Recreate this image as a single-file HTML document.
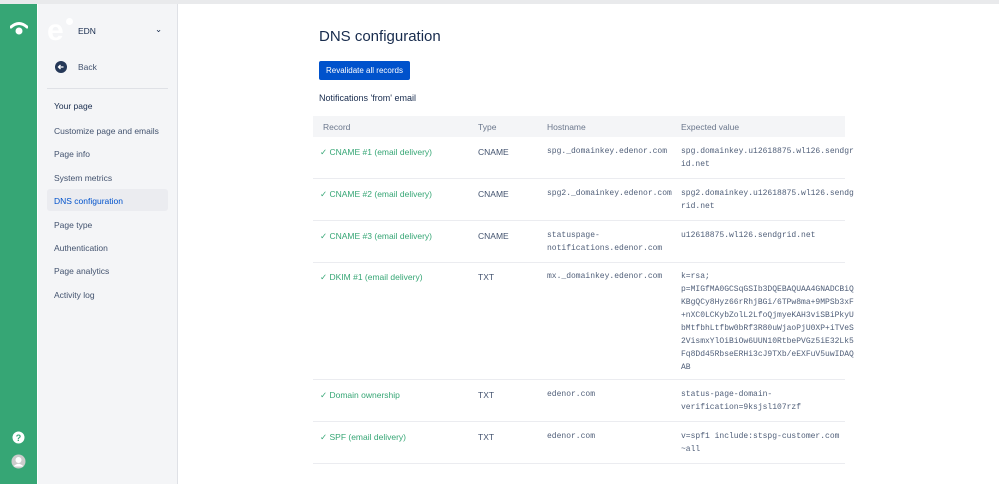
<!DOCTYPE html>
<html><head><meta charset="utf-8"><style>
*{margin:0;padding:0;box-sizing:border-box}
body{width:999px;height:484px;overflow:hidden;font-family:"Liberation Sans",sans-serif;background:#fff;position:relative;color:#172b4d}
.top{position:absolute;left:0;top:0;width:999px;height:4px;background:#e9eaec}
.g{position:absolute;left:0;top:4px;width:37px;height:480px;background:#36a675}
.nav{position:absolute;left:37px;top:4px;width:141px;height:480px;background:#f4f5f7;border-left:1px solid #fff;border-right:1px solid #dfe1e6}
.nav div{position:absolute;font-size:8.5px;color:#42526e}
.main div,.main span{position:absolute}
.m{font-family:"Liberation Mono",monospace;font-size:8px;line-height:13px;color:#505f79}
.r{font-size:8.5px;color:#36a675}
.t{font-size:8.5px;color:#42526e}
.hl{position:absolute;left:313px;width:532px;height:1px;background:#ebecf0}
</style></head><body>
<div class="top"></div>
<div class="g">
<svg style="position:absolute;left:10px;top:17px" width="18" height="14" viewBox="0 0 18 14"><path d="M1 6 Q9 -1 17 6" stroke="#fff" stroke-width="3" fill="none" stroke-linecap="round"/><circle cx="9" cy="10" r="3.5" fill="#fff"/></svg>
<svg style="position:absolute;left:12px;top:427px" width="13" height="13"><circle cx="6.5" cy="6.5" r="6" fill="#fff"/><text x="6.5" y="10" font-size="9" font-weight="bold" text-anchor="middle" fill="#36a675" font-family="Liberation Sans">?</text></svg>
<svg style="position:absolute;left:11px;top:450px" width="15" height="15"><circle cx="7.5" cy="7.5" r="7" fill="#ccc"/><circle cx="7.5" cy="6" r="3" fill="#fff"/><path d="M2.5 12.5 Q7.5 7 12.5 12.5" fill="#fff"/></svg>
</div>
<div class="nav">
<div style="left:9px;top:12px;font-size:30px;color:#fff;font-weight:bold;font-family:'Liberation Sans';line-height:30px">e</div>
<div style="left:28px;top:14px;width:7px;height:7px;border-radius:4px;background:#fff"></div>
<div style="left:40px;top:22px;color:#172b4d">EDN</div>
<div style="left:117px;top:20px;color:#172b4d">⌄</div>
<svg style="position:absolute;left:17px;top:57px" width="12" height="12"><circle cx="6" cy="6" r="6" fill="#253858"/><path d="M8.5 6H3.5M5.5 4L3.5 6L5.5 8" stroke="#fff" stroke-width="1.3" fill="none"/></svg>
<div style="left:40px;top:58px">Back</div>
<div style="left:9px;top:84px;width:121px;height:1px;background:#dfe1e6"></div>
<div style="left:16px;top:97px;color:#172b4d">Your page</div>
<div style="left:16px;top:122px">Customize page and emails</div>
<div style="left:16px;top:145px">Page info</div>
<div style="left:16px;top:169px">System metrics</div>
<div style="left:9px;top:185px;width:121px;height:22px;background:#ebecf0;border-radius:3px"></div>
<div style="left:16px;top:192px;color:#0052cc">DNS configuration</div>
<div style="left:16px;top:216px">Page type</div>
<div style="left:16px;top:239px">Authentication</div>
<div style="left:16px;top:262px">Page analytics</div>
<div style="left:16px;top:286px">Activity log</div>
</div>
<div class="main">
<div style="left:319px;top:28px;font-size:15px;color:#172b4d">DNS configuration</div>
<div style="left:319px;top:61px;width:91px;height:19px;background:#0052cc;border-radius:2px;color:#fff;font-size:8px;line-height:19px;text-align:center">Revalidate all records</div>
<div style="left:319px;top:93px;font-size:9px;color:#172b4d">Notifications 'from' email</div>
<div style="left:313px;top:116px;width:532px;height:21px;background:#f4f5f7"></div>
<div class="t" style="left:323px;top:122px;color:#6b778c">Record</div>
<div class="t" style="left:478px;top:122px;color:#6b778c">Type</div>
<div class="t" style="left:547px;top:122px;color:#6b778c">Hostname</div>
<div class="t" style="left:681px;top:122px;color:#6b778c">Expected value</div>

<div class="r" style="left:320px;top:147px">✓ CNAME #1 (email delivery)</div>
<div class="t" style="left:478px;top:147px">CNAME</div>
<div class="m" style="left:547px;top:145px">spg._domainkey.edenor.com</div>
<div class="m" style="left:681px;top:145px">spg.domainkey.u12618875.wl126.sendgr<br>id.net</div>
<div class="hl" style="top:178px"></div>

<div class="r" style="left:320px;top:189px">✓ CNAME #2 (email delivery)</div>
<div class="t" style="left:478px;top:189px">CNAME</div>
<div class="m" style="left:547px;top:187px">spg2._domainkey.edenor.com</div>
<div class="m" style="left:681px;top:187px">spg2.domainkey.u12618875.wl126.sendg<br>rid.net</div>
<div class="hl" style="top:220px"></div>

<div class="r" style="left:320px;top:231px">✓ CNAME #3 (email delivery)</div>
<div class="t" style="left:478px;top:231px">CNAME</div>
<div class="m" style="left:547px;top:229px">statuspage-<br>notifications.edenor.com</div>
<div class="m" style="left:681px;top:229px">u12618875.wl126.sendgrid.net</div>
<div class="hl" style="top:262px"></div>

<div class="r" style="left:320px;top:272px">✓ DKIM #1 (email delivery)</div>
<div class="t" style="left:478px;top:272px">TXT</div>
<div class="m" style="left:547px;top:270px">mx._domainkey.edenor.com</div>
<div class="m" style="left:681px;top:270px">k=rsa;<br>p=MIGfMA0GCSqGSIb3DQEBAQUAA4GNADCBiQ<br>KBgQCy8Hyz66rRhjBGi/6TPw8ma+9MPSb3xF<br>+nXC0LCKybZolL2LfoQjmyeKAH3viSBiPkyU<br>bMtfbhLtfbw0bRf3R80uWjaoPjU0XP+iTVeS<br>2VismxYlOiBiOw6UUN10RtbePVGz5iE32Lk5<br>Fq8Dd45RbseERHi3cJ9TXb/eEXFuV5uwIDAQ<br>AB</div>
<div class="hl" style="top:379px"></div>

<div class="r" style="left:320px;top:390px">✓ Domain ownership</div>
<div class="t" style="left:478px;top:390px">TXT</div>
<div class="m" style="left:547px;top:388px">edenor.com</div>
<div class="m" style="left:681px;top:388px">status-page-domain-<br>verification=9ksjsl107rzf</div>
<div class="hl" style="top:421px"></div>

<div class="r" style="left:320px;top:432px">✓ SPF (email delivery)</div>
<div class="t" style="left:478px;top:432px">TXT</div>
<div class="m" style="left:547px;top:430px">edenor.com</div>
<div class="m" style="left:681px;top:430px">v=spf1 include:stspg-customer.com<br>~all</div>
<div class="hl" style="top:463px"></div>
</div>
</body></html>
